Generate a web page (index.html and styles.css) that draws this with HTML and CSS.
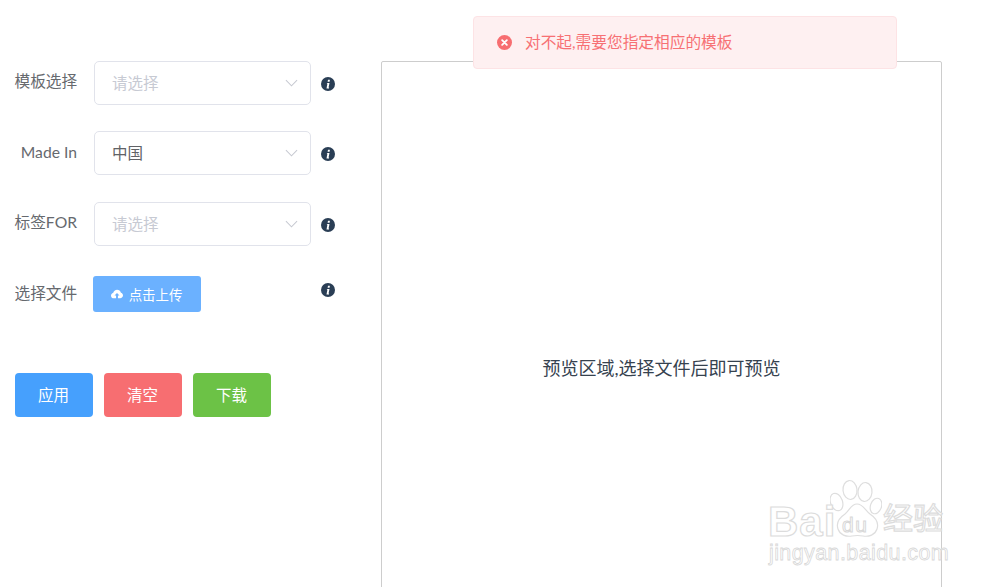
FILE: index.html
```html
<!DOCTYPE html>
<html lang="zh-CN">
<head>
<meta charset="utf-8">
<title>预览</title>
<link rel="stylesheet" href="styles.css">
</head>
<body>
<main class="page">
  <section class="form">
    <div class="row">
      <label class="label">模板选择</label>
      <div class="select placeholder"><span class="select-text">请选择</span>
        <svg class="chevron" viewBox="0 0 14 8"><path d="M1 1l6 6 6-6"/></svg></div>
      <svg class="info" viewBox="0 0 14 14"><circle cx="7" cy="7" r="7"/><path class="info-i" d="M6.200 5.900h2.300L7.600 10.200c-.1.300 0 .4.500.3l-.1.900H5.500l.9-4.600H5.700zM7 2.700h1.900l-.3 2H6.600z"/></svg>
    </div>
    <div class="row">
      <label class="label label-latin">Made In</label>
      <div class="select"><span class="select-text">中国</span>
        <svg class="chevron" viewBox="0 0 14 8"><path d="M1 1l6 6 6-6"/></svg></div>
      <svg class="info" viewBox="0 0 14 14"><circle cx="7" cy="7" r="7"/><path class="info-i" d="M6.200 5.900h2.300L7.600 10.200c-.1.300 0 .4.500.3l-.1.900H5.500l.9-4.600H5.700zM7 2.700h1.900l-.3 2H6.600z"/></svg>
    </div>
    <div class="row">
      <label class="label">标签FOR</label>
      <div class="select placeholder"><span class="select-text">请选择</span>
        <svg class="chevron" viewBox="0 0 14 8"><path d="M1 1l6 6 6-6"/></svg></div>
      <svg class="info" viewBox="0 0 14 14"><circle cx="7" cy="7" r="7"/><path class="info-i" d="M6.200 5.900h2.300L7.600 10.200c-.1.300 0 .4.500.3l-.1.900H5.500l.9-4.600H5.700zM7 2.700h1.900l-.3 2H6.600z"/></svg>
    </div>
    <div class="row row-upload">
      <label class="label">选择文件</label>
      <div class="upload-cell">
        <button class="upload">
          <svg class="cloud" viewBox="0 0 14 11"><path d="M3.400 10.500C1.500 10.500 0 9.200 0 7.400c0-1.500 1-2.700 2.500-3C3 2 5 .4 7.100.4c2.200 0 4 1.500 4.500 3.600C13 4.300 14 5.600 14 7.100c0 1.900-1.500 3.400-3.400 3.400H8.100V7.300h1.800L7 4.200 4.100 7.300h1.800v3.200z"/></svg>
          <span>点击上传</span>
        </button>
      </div>
      <svg class="info info-up" viewBox="0 0 14 14"><circle cx="7" cy="7" r="7"/><path class="info-i" d="M6.200 5.900h2.300L7.600 10.200c-.1.300 0 .4.500.3l-.1.900H5.500l.9-4.600H5.700zM7 2.700h1.900l-.3 2H6.600z"/></svg>
    </div>
    <div class="actions">
      <button class="btn btn-blue"><span class="btn-text">应用</span></button>
      <button class="btn btn-red"><span class="btn-text">清空</span></button>
      <button class="btn btn-green"><span class="btn-text">下载</span></button>
    </div>
  </section>
  <section class="preview">预览区域,选择文件后即可预览</section>
</main>

<div class="message">
  <svg class="msg-icon" viewBox="0 0 16 16"><circle cx="8" cy="8" r="8"/><path d="M5.500 5.500l5 5M10.500 5.500l-5 5"/></svg>
  <span class="msg-text">对不起,需要您指定相应的模板</span>
</div>

<div class="watermark">
  <svg class="paw" viewBox="0 0 52 60"><ellipse cx="6.500" cy="23" rx="6" ry="9" transform="rotate(-20 6.500 23)"/><ellipse cx="20" cy="11" rx="7" ry="9.500" transform="rotate(-6 20 11)"/><ellipse cx="35" cy="13" rx="7" ry="9.500" transform="rotate(6 35 13)"/><ellipse cx="46" cy="27" rx="5.500" ry="8" transform="rotate(20 46 27)"/><path d="M27 25c6 0 8 6 13 10 6 4 9 9 7 15-2 6-8 8-14 7-4-.7-7-.7-11 0-6 1-12-1-14-7-2-6 1-11 7-15 5-4 6-10 12-10z"/></svg>
  <span class="wm-bai">Bai</span>
  <span class="wm-du">du</span>
  <span class="wm-cn">经验</span>
  <span class="wm-url">jingyan.baidu.com</span>
</div>
</body>
</html>
```
FILE: styles.css
```css
* { box-sizing: border-box; }
html, body { margin: 0; height: 100%; overflow: hidden; background: #fff; }
body {
  font-family: Lato, "Noto Sans CJK SC", sans-serif;
  font-size: 15.500px;
  color: #66696e;
}
.page {
  display: flex;
  height: 587px;
  padding: 61px 0 0 14.500px;
  overflow: hidden;
}
.form { width: 366.500px; flex: none; }
.row {
  display: flex;
  align-items: center;
  height: 44px;
  margin-bottom: 26.400px;
}
.label { width: 62.500px; flex: none; text-align: right; line-height: 44px; position: relative; top: -2px; white-space: nowrap; font-size: 15.700px; }
.label-latin { top: -1px; }
.select {
  width: 216.500px;
  height: 44px;
  margin-left: 17px;
  padding: 0 12px 0 17px;
  flex: none;
  display: flex;
  align-items: center;
  justify-content: space-between;
  border: 1.500px solid #e1e3eb;
  border-radius: 5px;
  color: #606266;
  background: #fff;
}
.select-text { margin-top: -2px; }
.placeholder { color: #c7cad3; }
.chevron { width: 13px; height: 8px; fill: none; stroke: #c6c9d1; stroke-width: 1.100; }
.info { width: 14px; height: 14px; flex: none; margin-left: 10.500px; position: relative; top: 1px; }
.info circle { fill: #2a3e55; }
.info-i { fill: #fff; }
.row-upload { height: 36px; margin-top: 30px; margin-bottom: 61px; align-items: flex-start; }
.row-upload .label { line-height: 36px; top: -1px; }
.upload-cell { width: 217.500px; margin-left: 16px; flex: none; }
.info-up { margin-top: 6px; }
.upload {
  width: 108px;
  height: 36px;
  display: flex;
  align-items: center;
  justify-content: center;
  gap: 6px;
  padding: 0 1px 0 0;
  border: 0;
  border-radius: 3px;
  background: #6bb1ff;
  color: #fff;
  font: inherit;
  font-size: 13.400px;
}
.cloud { width: 12px; height: 10px; fill: #fff; }
.actions { display: flex; gap: 11px; }
.btn {
  width: 78px;
  height: 44px;
  padding: 0;
  border: 0;
  border-radius: 4px;
  color: #fff;
  font: inherit;
}
.btn-text { position: relative; top: -1px; }
.btn-blue { background: #46a0fd; }
.btn-red { background: #f76e71; }
.btn-green { background: #6cc246; }
.preview {
  width: 561px;
  height: 640px;
  flex: none;
  padding-top: 292px;
  border: 1px solid #cdcdcd;
  border-radius: 2px;
  text-align: center;
  font-size: 18px;
  line-height: 28px;
  color: #36424f;
}
.message {
  position: absolute;
  left: 473px;
  top: 16px;
  width: 424px;
  height: 53px;
  display: flex;
  align-items: center;
  gap: 13px;
  padding-left: 23px;
  background: #fef0f1;
  border: 1px solid #fde3e5;
  border-radius: 4px;
  color: #f77074;
  font-size: 15.700px;
}
.msg-text { margin-top: -2px; }
.msg-icon { width: 15px; height: 15px; flex: none; }
.msg-icon circle { fill: #f76e71; }
.msg-icon path { stroke: #fff; stroke-width: 2; stroke-linecap: round; }
.watermark {
  position: absolute;
  left: 760px;
  top: 478px;
  width: 200px;
  height: 90px;
  font-family: "Liberation Sans", "Noto Sans CJK SC", sans-serif;
  color: #fff;
  -webkit-text-stroke: 1.200px #dcdcdc;
}
.watermark span { position: absolute; line-height: 1; white-space: nowrap; }
.paw {
  position: absolute;
  left: 70px;
  top: 1px;
  width: 52px;
  height: 60px;
  fill: #fff;
  stroke: #dedede;
  stroke-width: 1.200;
}
.wm-bai { left: 8px; top: 23px; font-size: 42px; font-weight: 700; letter-spacing: 1px; }
.wm-du { left: 82px; top: 36px; font-size: 21px; letter-spacing: 1.500px; -webkit-text-stroke: 1px #d8d8d8; }
.wm-cn { left: 123px; top: 26px; font-size: 30px; }
.wm-url { left: 9px; top: 65px; font-size: 21.500px; letter-spacing: .4px; -webkit-text-stroke: .8px #d8d8d8; }
```
